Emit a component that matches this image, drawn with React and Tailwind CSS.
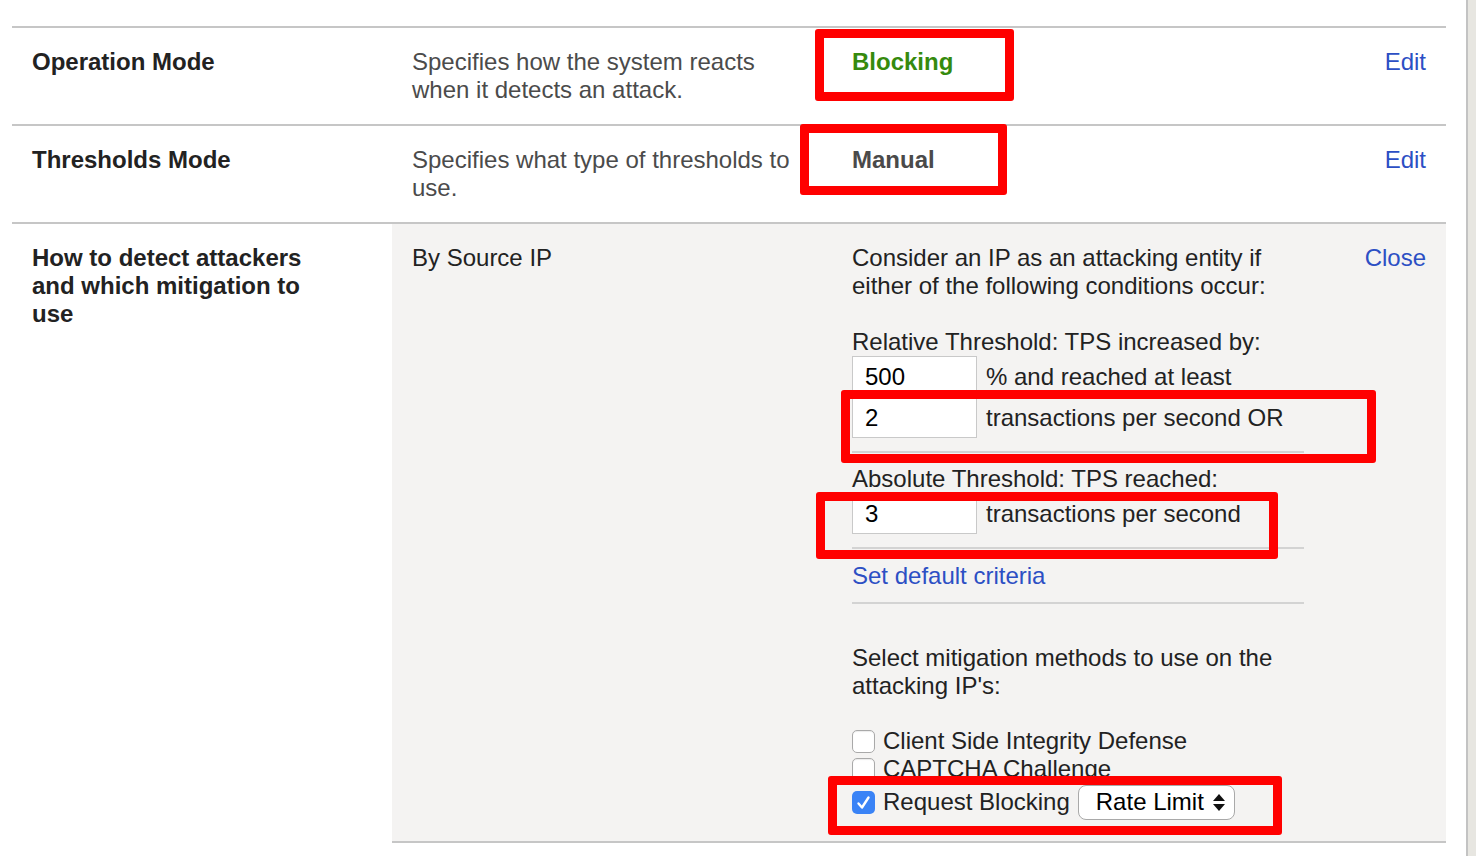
import React from 'react';

const Annotation = ({ className }) => (
  <div className={`pointer-events-none absolute rounded-[3px] border-[9px] border-[#ff0000] ${className}`} />
);

const ThresholdInput = ({ value, label }) => (
  <div className="flex h-[41px] items-center">
    <div className="flex h-full w-[125px] items-center border border-[#c9c9c9] bg-white pl-3 text-black">{value}</div>
    <span className="ml-[9px]">{label}</span>
  </div>
);

const Checkbox = ({ checked }) =>
  checked ? (
    <span className="flex h-[23px] w-[23px] shrink-0 items-center justify-center rounded-[5px] bg-[#3a83f6]">
      <svg width="23" height="23" viewBox="0 0 23 23">
        <path d="M6.5 12.5 L10 16.5 L16.5 6.5" fill="none" stroke="white" strokeWidth="2.4" strokeLinecap="round" strokeLinejoin="round" />
      </svg>
    </span>
  ) : (
    <span className="h-[23px] w-[23px] shrink-0 rounded-[5px] border border-[#a9a9a9] bg-white shadow-[inset_0_1px_1px_rgba(0,0,0,0.08)]" />
  );

const Separator = ({ className }) => <div className={`h-[2px] bg-[#d3d3d3] ${className}`} />;

const SettingRow = ({ label, description, children }) => (
  <div className="flex border-b-2 border-[#c6c6c6]">
    <div className="w-[380px] px-5 pt-5 pb-5 font-bold text-[#222]">{label}</div>
    <div className="w-[440px] px-5 pt-5 pb-5 text-[#4b4b4b]">{description}</div>
    <div className="w-[472px] pl-5 pt-5">{children}</div>
    <div className="flex-1 pr-5 pt-5 text-right">
      <a href="#" className="text-[#2c4fc4]">Edit</a>
    </div>
  </div>
);

export default function App() {
  return (
    <div className="relative flex min-h-[856px] w-[1476px] bg-white font-['Liberation_Sans',Arial,sans-serif] text-[24px] leading-[28px] text-[#222]">
      <div className="flex-1 pt-[26px] pl-3 pr-5">
        <div className="border-t-2 border-[#c6c6c6]">
          <SettingRow label="Operation Mode" description="Specifies how the system reacts when it detects an attack.">
            <span className="font-bold text-[#358a0d]">Blocking</span>
          </SettingRow>
          <SettingRow label="Thresholds Mode" description="Specifies what type of thresholds to use.">
            <span className="font-bold text-[#4a4a4a]">Manual</span>
          </SettingRow>

          <div className="flex">
            <div className="w-[380px] px-5 pt-5 font-bold text-[#222]">
              <div className="max-w-[300px]">How to detect attackers and which mitigation to use</div>
            </div>
            <div className="flex flex-1 border-b-2 border-[#c6c6c6] bg-[#f4f3f2]">
              <div className="w-[440px] px-5 pt-5">By Source IP</div>
              <div className="w-[472px] pl-5 pt-5 pb-5">
                <div className="w-[452px]">
                  <p>Consider an IP as an attacking entity if either of the following conditions occur:</p>
                  <p className="mt-[28px]">Relative Threshold: TPS increased by:</p>
                  <ThresholdInput value="500" label="% and reached at least" />
                  <ThresholdInput value="2" label="transactions per second OR" />
                  <Separator className="mt-[13px]" />
                  <p className="mt-[12px]">Absolute Threshold: TPS reached:</p>
                  <ThresholdInput value="3" label="transactions per second" />
                  <Separator className="mt-[13px]" />
                  <a href="#" className="mt-[13px] block text-[#2c4fc4]">Set default criteria</a>
                  <Separator className="mt-[12px]" />
                  <p className="mt-[40px]">Select mitigation methods to use on the attacking IP's:</p>
                  <div className="mt-[27px]">
                    <label className="flex h-[28px] items-center gap-2">
                      <Checkbox />
                      <span>Client Side Integrity Defense</span>
                    </label>
                    <label className="flex h-[28px] items-center gap-2">
                      <Checkbox />
                      <span>CAPTCHA Challenge</span>
                    </label>
                    <div className="flex h-[38px] items-center gap-2">
                      <Checkbox checked />
                      <span>Request Blocking</span>
                      <div className="flex h-[35px] w-[157px] items-center justify-between rounded-[8px] border border-[#a9a9a9] bg-white pl-[17px] pr-[9px] text-black">
                        <span>Rate Limit</span>
                        <svg width="12" height="17" viewBox="0 0 12 17">
                          <path d="M6 0 L12 7 L0 7 Z" fill="#111" />
                          <path d="M0 10 L12 10 L6 17 Z" fill="#111" />
                        </svg>
                      </div>
                    </div>
                  </div>
                </div>
              </div>
              <div className="flex-1 pr-5 pt-5 text-right">
                <a href="#" className="text-[#2c4fc4]">Close</a>
              </div>
            </div>
          </div>
        </div>
      </div>
      <div className="w-[10px] border-l-2 border-[#c3c3c3] bg-[#e7e6e1]" />

      <Annotation className="left-[815px] top-[29px] h-[72px] w-[199px]" />
      <Annotation className="left-[800px] top-[124px] h-[71px] w-[207px]" />
      <Annotation className="left-[841px] top-[390px] h-[73px] w-[535px]" />
      <Annotation className="left-[816px] top-[492px] h-[67px] w-[462px]" />
      <Annotation className="left-[828px] top-[776px] h-[59px] w-[454px]" />
    </div>
  );
}
